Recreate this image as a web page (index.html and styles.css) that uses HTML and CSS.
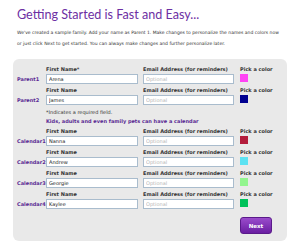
FILE: index.html
```html
<!DOCTYPE html>
<html lang="en">
<head>
  <meta charset="UTF-8" />
  <title>Getting Started</title>
  <link rel="stylesheet" href="styles.css">
</head>
<body>
  <div class="page">
    <h1>Getting Started is Fast and Easy...</h1>
    <p class="intro">We've created a sample family. Add your name as Parent 1. Make changes to personalize the names and colors now or just click Next to get started. You can always make changes and further personalize later.</p>

    <div class="panel">
      <div class="row">
        <span class="who">Parent1</span>
        <div class="field">
          <label>First Name*</label>
          <input type="text" value="Arena">
        </div>
        <div class="field email">
          <label>Email Address (for reminders)</label>
          <input type="text" placeholder="Optional">
        </div>
        <div class="field color">
          <label>Pick a color</label>
          <span class="swatch" style="background:#ff44f4"></span>
        </div>
      </div>
      <div class="row">
        <span class="who">Parent2</span>
        <div class="field">
          <label>First Name</label>
          <input type="text" value="James">
        </div>
        <div class="field email">
          <label>Email Address (for reminders)</label>
          <input type="text" placeholder="Optional">
        </div>
        <div class="field color">
          <label>Pick a color</label>
          <span class="swatch" style="background:#000090"></span>
        </div>
      </div>

      <p class="note">*Indicates a required field.</p>
      <p class="kids">Kids, adults and even family pets can have a calendar</p>

      <div class="row">
        <span class="who">Calendar1</span>
        <div class="field">
          <label>First Name</label>
          <input type="text" value="Nanna">
        </div>
        <div class="field email">
          <label>Email Address (for reminders)</label>
          <input type="text" placeholder="Optional">
        </div>
        <div class="field color">
          <label>Pick a color</label>
          <span class="swatch" style="background:#b41d3c"></span>
        </div>
      </div>
      <div class="row">
        <span class="who">Calendar2</span>
        <div class="field">
          <label>First Name</label>
          <input type="text" value="Andrew">
        </div>
        <div class="field email">
          <label>Email Address (for reminders)</label>
          <input type="text" placeholder="Optional">
        </div>
        <div class="field color">
          <label>Pick a color</label>
          <span class="swatch" style="background:#5ce2f2"></span>
        </div>
      </div>
      <div class="row">
        <span class="who">Calendar3</span>
        <div class="field">
          <label>First Name</label>
          <input type="text" value="Georgie">
        </div>
        <div class="field email">
          <label>Email Address (for reminders)</label>
          <input type="text" placeholder="Optional">
        </div>
        <div class="field color">
          <label>Pick a color</label>
          <span class="swatch" style="background:#92f58e"></span>
        </div>
      </div>
      <div class="row">
        <span class="who">Calendar4</span>
        <div class="field">
          <label>First Name</label>
          <input type="text" value="Kaylee">
        </div>
        <div class="field email">
          <label>Email Address (for reminders)</label>
          <input type="text" placeholder="Optional">
        </div>
        <div class="field color">
          <label>Pick a color</label>
          <span class="swatch" style="background:#00c25a"></span>
        </div>
      </div>

      <div class="actions">
        <button class="next-btn">Next</button>
      </div>
    </div>
  </div>
</body>
</html>
```

FILE: styles.css
```css
body {
  margin: 0;
  background: #fff;
  font-family: "DejaVu Sans", Verdana, sans-serif;
  color: #333;
}
.page {
  padding: 7px 13px 0 13px;
}
h1 {
  margin: 0 0 0 4px;
  font-family: Lato, "Open Sans", sans-serif;
  font-weight: normal;
  font-size: 12.6px;
  line-height: 16px;
  color: #6d2fa3;
}
.intro {
  margin: 4px 0 0 4px;
  font-size: 4.5px;
  line-height: 11px;
  color: #333;
  width: 262px;
}
.panel {
  margin-top: 10px;
  background: #e9e9e9;
  border-radius: 6px;
  padding: 4px 0 5px 4px;
  height: 173px;
}
.row {
  display: flex;
  align-items: flex-end;
  height: 21px;
}
.who {
  width: 29px;
  font-size: 5px;
  font-weight: bold;
  color: #5a2a93;
  line-height: 10px;
}
.field {
  display: flex;
  flex-direction: column;
  width: 92px;
  margin-right: 5px;
}
.field.email {
  width: 91px;
  margin-right: 6px;
}
.field label {
  font-size: 5px;
  font-weight: bold;
  color: #333;
  line-height: 10px;
  white-space: nowrap;
}
.field input {
  box-sizing: border-box;
  width: 100%;
  height: 10px;
  margin: 0;
  padding: 0 2px;
  border: 1px solid #a9bccd;
  background: #fff;
  font-family: "DejaVu Sans", sans-serif;
  font-size: 5px;
  color: #222;
  outline: none;
}
.field input::placeholder {
  color: #b5b5b5;
}
.field.color {
  width: 40px;
  margin-right: 0;
}
.swatch {
  display: block;
  width: 8px;
  height: 8px;
  margin-bottom: 2px;
}
.note {
  margin: 3px 0 0 29px;
  font-size: 5px;
  line-height: 9px;
  color: #333;
}
.kids {
  margin: 0 0 -1px 29px;
  font-size: 5px;
  line-height: 9px;
  font-weight: bold;
  color: #5a2a93;
}
.actions {
  display: flex;
  justify-content: flex-end;
  padding-right: 15px;
  margin-top: 8px;
}
.next-btn {
  width: 32px;
  height: 17px;
  border: 1px solid #5a1a8a;
  border-radius: 3px;
  background: linear-gradient(#9a4ccc, #6a1ea2);
  color: #fff;
  font-family: "DejaVu Sans", sans-serif;
  font-size: 5.5px;
  font-weight: bold;
  padding: 0;
}
```
